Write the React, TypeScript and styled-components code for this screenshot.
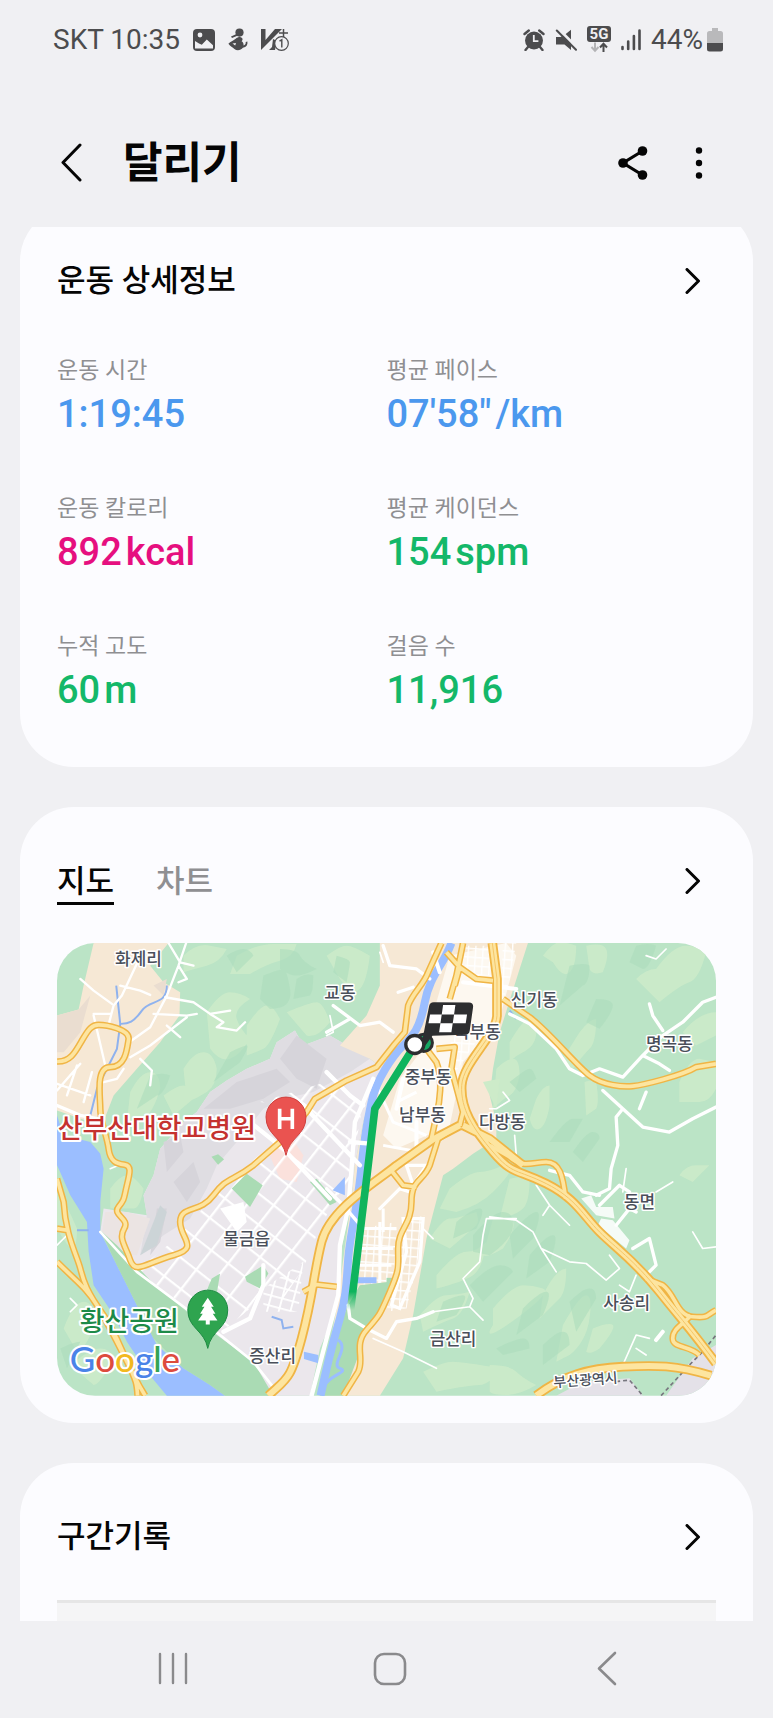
import React from 'react';
import styled, { createGlobalStyle } from 'styled-components';

const GlobalStyle = createGlobalStyle`
  * { box-sizing: border-box; }
  body {
    margin: 0;
    background: #f0f0f3;
    color: #050505;
    font-family: Roboto, "Noto Sans CJK KR", sans-serif;
  }
  button {
    border: 0;
    padding: 0;
    background: none;
    color: inherit;
    font: inherit;
    cursor: pointer;
  }
  svg { display: block; }
`;

const Screen = styled.div`
  display: flex;
  flex-direction: column;
  height: 100vh;
`;

const StatusBar = styled.div`
  display: flex;
  flex: none;
  justify-content: space-between;
  align-items: center;
  height: 80px;
  padding: 0 50px 0 53px;
  color: #4c4c4e;
  font-size: 28px;
  line-height: 32px;
`;

const StatusGroup = styled.div<{ $gap: number }>`
  display: flex;
  align-items: center;
  gap: ${(p) => p.$gap}px;
`;

const Header = styled.header`
  display: flex;
  flex: none;
  align-items: center;
  height: 147px;
  padding: 18px 60px 0;
`;

const Title = styled.h1`
  flex: 1;
  margin: 0 0 0 40px;
  font-size: 43px;
  line-height: 56px;
  font-weight: 700;
`;

const HeaderActions = styled.div`
  display: flex;
  align-items: center;
  gap: 36px;
`;

const Content = styled.main`
  flex: 1;
  min-height: 0;
  overflow-y: auto;
  scrollbar-width: none;
`;

const CardList = styled.div`
  display: flex;
  flex-direction: column;
  gap: 40px;
  margin-top: -20px;
  padding: 0 20px;
`;

const Card = styled.section<{ $bottom: number }>`
  padding: 54px 37px ${(p) => p.$bottom}px;
  border-radius: 54px;
  background: #fcfcff;
`;

const CardHead = styled.div`
  display: flex;
  justify-content: space-between;
  align-items: flex-start;
`;

const CardTitle = styled.h2`
  margin: 0;
  font-size: 31px;
  line-height: 40px;
  font-weight: 500;
`;

const ChevronButton = styled.button`
  display: grid;
  place-items: center;
  width: 46px;
  height: 40px;
`;

const Metrics = styled.dl`
  display: grid;
  grid-template-columns: 1fr 1fr;
  row-gap: 52px;
  margin: 54px 0 0;
`;

const MetricLabel = styled.dt`
  color: #8f8f92;
  font-size: 23px;
  line-height: 32px;
`;

const MetricValue = styled.dd<{ $color: string }>`
  display: flex;
  gap: 4px;
  margin: 0;
  color: ${(p) => p.$color};
  font-size: 38px;
  line-height: 54px;
  font-weight: 500;
`;

const Tabs = styled.div`
  display: flex;
  gap: 42px;
`;

const Tab = styled.button<{ $active?: boolean }>`
  height: 44px;
  border-bottom: 3px solid ${(p) => (p.$active ? '#050505' : 'transparent')};
  color: ${(p) => (p.$active ? '#050505' : '#8f8f92')};
  font-size: 31px;
  line-height: 40px;
  font-weight: 500;
`;

const MapFrame = styled.div`
  margin-top: 38px;
  overflow: hidden;
  border-radius: 38px;
`;

const MapSvg = styled.svg`
  width: 100%;
  height: auto;
  font-family: "Noto Sans CJK KR", sans-serif;
`;

const SplitTable = styled.div`
  height: 120px;
  margin-top: 43px;
  border-top: 3px solid #e6e6e6;
  background: #f5f5f6;
`;

const NavBar = styled.nav`
  display: grid;
  flex: none;
  grid-template-columns: repeat(3, 1fr);
  height: 97px;
  padding: 0 58px 2px 64px;
`;

const NavButton = styled.button`
  display: grid;
  place-items: center;
`;

const ChevronRight = () => (
  <svg width="16" height="26" viewBox="0 0 16 26" fill="none" stroke="#050505" strokeWidth="3" strokeLinecap="round" strokeLinejoin="round">
    <path d="M2 1.500 13.500 13 2 24.500" />
  </svg>
);

const PictureIcon = () => (
  <svg width="24" height="24" viewBox="0 0 24 24">
    <rect x="1" y="1" width="22" height="22" rx="4" fill="#4c4c4e" />
    <circle cx="8" cy="7" r="2.4" fill="#f0f0f3" />
    <path d="M3 13l4 2.4 2.8 1.4 5-5.2 6.2 5.6v3.2H3z" fill="#f0f0f3" />
  </svg>
);

const SwimmerIcon = () => (
  <svg width="20" height="24" viewBox="0 0 20 24" fill="#4c4c4e">
    <circle cx="11.5" cy="4.6" r="4.1" />
    <path d="M3 8.5 8.5 6l1.5 1.6L4 10z" />
    <path d="M8 10.500c2-1.600 4.500-2 6-.6 1 1 .5 2.300-.4 3.300 1.700 1 2.200 2.700 1.900 4.200 1.600-.4 2.500-1.500 2.200-3.400l1.700-.4c.5 3.500-1 5.500-4.500 6.200-2 2.600-6 3.200-8.500 1.200C4.600 19.400 2.400 18.500.4 15.800c2.200-2.600 4.600-2.700 7.600-5.300z" />
    <path d="M4.500 15.500l3.500-.6-.8 2.500z" fill="#f0f0f3" />
  </svg>
);

const BadgeIcon = () => (
  <svg width="29" height="24" viewBox="0 0 29 24">
    <path d="M1 1h4.500v11L15 1h7L1 22z" fill="#4c4c4e" />
    <path d="M13 11l4 2-2 9H9l3-3z" fill="#4c4c4e" />
    <path d="M23.500 1v8M19 5h9" stroke="#4c4c4e" strokeWidth="1.500" />
    <circle cx="21.500" cy="15.500" r="6.800" fill="#f0f0f3" stroke="#4c4c4e" strokeWidth="1.200" />
    <path d="M19.500 13.200l2.300-1.400V19.500" fill="none" stroke="#4c4c4e" strokeWidth="1.400" />
  </svg>
);

const AlarmIcon = () => (
  <svg width="22" height="22" viewBox="0 0 22 22">
    <circle cx="11" cy="11.500" r="9" fill="#4c4c4e" />
    <path d="M1.500 5 5.800 1.500M20.500 5 16.200 1.500M5 18l-2.500 3M17 18l2.500 3" stroke="#4c4c4e" strokeWidth="2.400" strokeLinecap="round" />
    <path d="M10.800 6v6.200h4.600" fill="none" stroke="#f0f0f3" strokeWidth="1.800" />
  </svg>
);

const MuteIcon = () => (
  <svg width="22" height="22" viewBox="0 0 22 22">
    <path d="M1 8h4.500l4-2L16 .8V21l-6.500-5.500H1z" fill="#4c4c4e" />
    <path d="M3.500 0 22 18.500" stroke="#f0f0f3" strokeWidth="3" />
    <path d="M1.800 1.500 21 20.800" stroke="#4c4c4e" strokeWidth="2" strokeLinecap="round" />
  </svg>
);

const FiveGIcon = () => (
  <svg width="24" height="28" viewBox="0 0 24 28">
    <rect width="24" height="16" rx="3" fill="#4c4c4e" />
    <text x="12" y="13" textAnchor="middle" fontFamily="Roboto, sans-serif" fontWeight="700" fontSize="15" fill="#f0f0f3">5G</text>
    <path d="M8 16.500v8M4.500 21 8 24.800 11.500 21" fill="none" stroke="#b3b3b5" strokeWidth="2" />
    <path d="M16.500 26v-8M13 21.500l3.500-3.800 3.500 3.800" fill="none" stroke="#4c4c4e" strokeWidth="2" />
  </svg>
);

const SignalIcon = () => (
  <svg width="20" height="22" viewBox="0 0 20 22" stroke="#4c4c4e" strokeWidth="2.600" strokeLinecap="round">
    <path d="M1.500 18v2M7.200 12.500V20M12.900 7V20M18.500 1.500V20" />
  </svg>
);

const BatteryIcon = () => (
  <svg width="16" height="24" viewBox="0 0 16 24">
    <path d="M5 0h6v3h2.500a2.500 2.500 0 0 1 2.500 2.500V16H0V5.500A2.500 2.500 0 0 1 2.500 3H5z" fill="#b9b9bb" />
    <path d="M0 15h16v6a2.500 2.500 0 0 1-2.500 2.500h-11A2.500 2.500 0 0 1 0 21z" fill="#4c4c4e" />
  </svg>
);

const metrics = [
  { label: '운동 시간', value: '1:19:45', color: '#4b98ee' },
  { label: '평균 페이스', value: '07\'58"', unit: '/km', color: '#4b98ee' },
  { label: '운동 칼로리', value: '892', unit: 'kcal', color: '#e60f7f' },
  { label: '평균 케이던스', value: '154', unit: 'spm', color: '#14b869' },
  { label: '누적 고도', value: '60', unit: 'm', color: '#14b869' },
  { label: '걸음 수', value: '11,916', color: '#14b869' },
];

/* Map geometry: one map unit is a third of a pixel at full width. */

const lightHills = [
  'M400 60q40-40 80-30l50 10q-20 40-60 50t-70 20z',
  'M560 60q60-35 110-35h70q-10 40-50 50t-90 40h-60z',
  'M470 230q40-60 70-60t60 20q-50 30-40 60t40 60q-30 50-60 60t-60-30z',
  'M400 400q30-50 60-50t40 50q0 50-30 70t-60 30z',
  'M240 470q30-60 60-60t30 50q-20 70-50 90t-50 10z',
  'M340 480q40-30 60-30t30 40l-60 50z',
  'M590 270q40-60 60-60t40 40q-30 80-50 90t-50 20z',
  'M830 60q40-30 60-30t70 30q-10 80-30 100t-60-30z',
  'M710 230q70-30 90-30t40 60q-40 50-70 40z',
  'M1480 60q30-40 50-40t50 10q0 60-20 80t-50-30z',
  'M1610 30q50-10 60 10t-10 70q-30 10-40-10z',
  'M1760 130q30-30 60-30 50-70 90-70t60 20q-20 80-50 90t-90 60z',
  'M1590 290q30-40 50-40 0 70-20 90t-50 60q-20-10-30-30z',
  'M1380 320q40-70 60-70t20 40-40 60-40 40z',
  'M1340 400q30-30 50-30t20 50q-10 50-30 60t-50 40z',
  'M1890 440q30-70 60-70l50 10v80q-20 40-50 40h-60z',
  'M1460 490q20-40 40-40v60q-10 60-30 70t-30-30z',
  'M1605 440q20-10 35 0 10 60 0 80l-30 20z',
  'M1900 290q50-60 100-60v70l-60 30z',
  'M1200 760q60-50 90-50t70-20q30 0 20 20t-50 60-110 60l-50-10z',
  'M1140 910q40-60 60-60t80-20q10 30 0 40t-80 70z',
  'M1160 1020q60-70 90-70t60-30q-10 80-40 100t-110 40z',
  'M1110 1140q50-60 80-60t70-10q-20 70-50 80t-90 40z',
  'M1380 730q40-10 60 0 0 70-20 90t-70 30z',
  'M1330 850q50-10 60 10t-30 80q-50 30-60 20z',
  'M1480 1080q40-80 70-80 0 70-20 90t-60 60z',
  'M1540 1170q50-90 70-90t10 70-60 110l-40 20z',
  'M1330 1120q60-70 90-70t60 10-80 90-70 20z',
  'M1630 1180q50-20 60-10t-40 70q-30 20-40 10z',
  'M1120 1310q60-30 90-30t140 20q-30 50-60 50t-130 20z',
  'M1320 1290q60 0 80 20t60 40q-50 30-90 30t-50-10z',
  'M1890 720q20-30 50-30h40l-50 50z',
  'M40 1180q30-80 60-80t40 60q-40 90-60 90z',
  'M60 1290q60-50 90-50t40 30q-40 80-60 80z',
  'M180 760q30-40 50-40t50 40q-10 60-30 60h-70z',
  'M20 740q10 50 20 60t40 80q0 50-10 60t-50-60z',
];

const darkHills = [
  'M640 120q50-20 60-20t20 60-60 60l-30-30z',
  'M690 40q50 0 60 20t50 40q-40 20-60 20t-50-20z',
  'M740 130q30-20 50-10 0 50-10 60l-50 10z',
  'M860 60q40 10 40 20t-10 60l-40-30z',
  'M530 60q30-20 50-20t30 20l-50 50z',
  'M300 420q40-10 60 0-20 60-40 60l-60 40z',
  'M540 350q40-20 50-20t-20 50l-80 60z',
  'M1560 90q50-10 60 0 0 50-20 60l-70 60z',
  'M1640 190q50 0 50 20t-40 70l-40-20z',
  'M1380 440q50-40 60-40t20 30l-50 40z',
  'M1500 620q50-70 70-70h30l-40 70z',
  'M1570 650q40-60 60-60t20 20l-50 70z',
  'M1760 30q40-10 60 0-20 70-40 70l-40-20z',
  'M1220 860q50-40 70-40t-10 60l-70 30z',
  'M1270 900q60-70 90-70t30 40-70 90l-50-10z',
  'M1380 900q60-70 80-70t-10 80l-60 60z',
  'M1440 960q50-60 70-60t-10 80l-70 50z',
  'M1260 1050q60-60 90-60t40 20l-90 90z',
  'M1420 1120q50-50 70-50t-10 70l-80 60z',
  'M1560 1100q40-40 60-40t20 30l-60 100z',
  'M1480 1230q40-40 60-40t20 40l-80 60z',
  'M1180 1100q40-20 60-20t-20 60l-60 20z',
  'M1340 1240q60-30 80-30t20 30l-80 20z',
  'M30 1240q40-20 60-20l-40 80z',
];

const whiteRoads = [
  'M262 80 215 180 190 210 175 268',
  'M408 22 385 90 350 180 300 275 240 318',
  'M355 22 390 80 430 90',
  'M90 130 130 165 185 205',
  'M20 465 90 385M130 240 165 390M80 390 50 480M125 410 100 500M20 445 120 480',
  'M210 150 270 165 300 178M345 185 430 200 480 235 540 225M310 235 410 240 440 235',
  'M350 270 390 305M410 245 300 330 240 365M270 370 305 405 300 450',
  'M480 235 520 260 500 275 560 285 585 260',
  'M385 90 410 130 385 140M130 235h50',
  'M160 440 200 430 220 400',
];

const wideWhiteRoads = [
  'M20 510 90 540 140 550',
  'M1000 30 1020 90 1100 100 1140 130',
  'M850 210 930 270 990 260 1030 290M900 250 830 290',
  'M1045 170 1090 155',
  'M1380 235 1440 265 1520 340 1560 400 1600 420 1650 400 1720 425 1780 360 1840 300 1900 260 1960 200 2000 185',
  'M1780 360 1830 385 1860 405M1840 285 1810 240 1800 205',
  'M1720 520 1700 545 1705 630 1685 700 1680 760 1640 780',
  'M1660 465 1720 520 1780 575 1860 590 1930 550 2000 515M1790 470 1770 520',
  'M1650 780 1600 770 1560 720 1500 705',
  'M1650 810 1710 750 1740 770M1750 940 1800 910 1820 990 1790 1020 1800 1030',
  'M1700 870 1740 820 1760 830',
  'M895 1110 900 1150 950 1180 1010 1210 1040 1160 1100 1150 1150 1130',
  'M830 760 880 810 940 880M990 820 1050 760 1080 770',
];

const thinWhiteRoads = [
  'M840 240 850 290 830 300M990 50 1000 80',
  'M1320 845 1400 855 1450 890 1475 940 1560 980 1610 985 1670 1035 1710 1000 1680 960',
  'M1475 940 1520 1010M1460 750 1500 810 1480 840M1500 810 1560 870',
  'M1150 1130 1260 1115 1270 1090 1240 1030 1290 980 1300 900 1310 850 1400 850',
  'M1260 1115 1300 1155M970 1210 1060 1250 1160 1300',
  'M1720 1290 1760 1200 1800 1210M1760 1240 1790 1260',
  'M1930 890 1960 940 2000 935M1820 770 1870 740M1720 770 1730 700',
  'M1790 60 1820 70 1850 40M1360 470 1380 495 1340 520 1320 520M1395 600 1400 660',
  'M1710 1050 1740 1070 1760 1020M1120 880 1150 910',
  'M50 900 20 930M60 1090 80 1110 60 1130M205 690 180 700',
];

const mainRoads = [
  'M20 378C60 380 75 350 95 315S125 268 145 268 240 280 235 312 225 395 180 395 150 480 150 520 170 600 175 640 200 685 222 688 240 710 230 750 225 790 205 815 240 850 222 880 225 930 240 975 290 982 370 960 390 910 390 860 450 835 490 780 545 740 610 690L690 620 770 530 795 490 890 435 980 395 1035 325 1065 290 1075 210C1090 170 1120 150 1135 110L1175 22',
  'M1240 22 1220 120 1200 190',
  'M1190 50 1230 95 1280 130 1330 135',
  'M1230 95 1215 150',
  'M1360 190 1440 245C1500 290 1580 390 1620 420S1720 455 1750 452 1900 420 1940 395L2000 385',
  'M1320 630 1380 665C1420 700 1450 680 1490 680S1540 720 1548 790',
  'M1130 340 1160 380C1180 430 1170 500 1160 540L1145 610',
  'M1160 340 1215 335 1205 400 1240 530 1230 570',
  'M1235 565 1165 610 1140 690C1120 740 1085 730 1085 800S1045 880 1045 940 1050 1000 1020 1070 990 1140 950 1185 945 1270 925 1310L880 1382',
  'M1020 700 1060 750 1100 755',
  'M20 730 40 800C45 900 80 960 90 1000S110 1070 160 1140 220 1280 285 1382',
  'M20 980C80 1040 110 1060 140 1110S200 1220 230 1280 260 1350 262 1382',
  'M20 880 50 885',
  'M760 1070 800 1048 860 1055',
  'M1790 1030 1840 1050C1880 1080 1880 1140 1930 1145S1970 1140 2000 1125',
  'M1925 1140C1900 1170 1870 1180 1870 1210S1920 1230 1950 1260',
];

const highways = [
  'M1328 22 1342 130 1342 240C1340 300 1240 380 1236 450S1270 580 1330 650 1400 700 1490 745 1600 840 1650 890 1750 970 1830 1070 1930 1190 2000 1285',
  'M1240 570 1320 610 1420 690',
  'M1230 570 1150 612 1040 690C980 740 840 820 815 920S790 1080 755 1210 710 1330 655 1382',
  'M1460 1382C1540 1320 1620 1300 1720 1295S1880 1290 1985 1322',
];

const placeLabels = [
  { text: '화제리', x: 265, y: 88 },
  { text: '교동', x: 870, y: 190 },
  { text: '신기동', x: 1454, y: 211 },
  { text: '북부동', x: 1283, y: 308 },
  { text: '명곡동', x: 1860, y: 343 },
  { text: '중부동', x: 1135, y: 443 },
  { text: '남부동', x: 1118, y: 558 },
  { text: '다방동', x: 1358, y: 578 },
  { text: '물금읍', x: 590, y: 930 },
  { text: '증산리', x: 668, y: 1280 },
  { text: '동면', x: 1770, y: 818 },
  { text: '사송리', x: 1732, y: 1123 },
  { text: '금산리', x: 1210, y: 1230 },
];

const RouteMap = () => (
  <MapSvg viewBox="20 22 1980 1360" role="img" aria-label="달리기 경로 지도">
    <defs>
      <pattern id="blocks" width="64" height="74" patternUnits="userSpaceOnUse" patternTransform="rotate(38)">
        <path d="M0 0H64M0 0V74" stroke="#fff" strokeWidth="14" />
      </pattern>
      <pattern id="smallBlocks" width="34" height="30" patternUnits="userSpaceOnUse" patternTransform="rotate(15)">
        <path d="M0 0H34M0 0V30" stroke="#fff" strokeWidth="11" />
      </pattern>
      <pattern id="lots" width="22" height="26" patternUnits="userSpaceOnUse" patternTransform="rotate(4)">
        <path d="M0 0H22M0 0V26" stroke="#fff" strokeWidth="8" />
      </pattern>
      <linearGradient id="routeFade" gradientUnits="userSpaceOnUse" x1="0" y1="1070" x2="0" y2="1125">
        <stop offset="0" stopColor="#0fb45d" />
        <stop offset="1" stopColor="#0fb45d" stopOpacity="0" />
      </linearGradient>
    </defs>

    {/* terrain */}
    <path d="M20 22H2000V1382H20z" fill="#bbe4c6" />
    <path d={lightHills.join('')} fill="#cdebc9" opacity="0.85" />
    <path d={darkHills.join('')} fill="#acdcbd" opacity="0.6" />

    {/* valley farmland */}
    <path d="M130 22H355L300 90 340 140 390 170 388 240 330 320 260 400 190 480 165 545 120 560 20 525V240L85 222 100 150z" fill="#f6e8d5" />
    <path d="M20 240 85 222 120 180 90 290 40 350 20 350zM310 150l40-20-10 50z" fill="#eaddd0" />

    {/* town and quarry ground */}
    <path d="M310 720 330 640 400 560 440 530 480 470 530 435 590 400 660 370 680 320 735 285 760 330 840 300 960 370 1000 400 965 480 940 560 915 690 905 790 875 940 860 1120 810 1240 780 1382H660L610 1280 500 1200 330 1060 200 970 150 890 160 820 290 840 280 780z" fill="#ebe7ec" />
    <path d="M310 720 330 640 400 560 440 530 480 470 530 435 590 400 660 370 680 320 735 285 760 330 840 300 960 370 900 410 790 470 700 490 640 520 560 620 500 690 470 760 420 850 340 900 270 960 290 840 280 780z" fill="#dfdde2" />
    <path d="M460 520 560 440 680 400 720 440 640 490 540 520zM690 370 740 300 830 370 800 460 740 430zM340 620l50-20 10 50-50 60zM370 740l60-60 20 60-40 60zM320 820l30 0-20 100-30 40z" fill="#d6d4da" />
    <path d="M330 810 350 830 320 930 270 960z" fill="#ccd4d7" />
    <path d="M165 830 230 830 300 850 260 960 200 960 155 890z" fill="#ebe4e3" />
    <path d="M650 640 720 600 760 660 740 740 690 730z" fill="#fbe1dc" />
    <path d="M630 500 720 510 700 600 560 715 430 850 390 900 260 1005 420 1125 500 1200 540 1170 600 1120 640 1050 700 1090 760 1000 800 900 850 800 900 730 940 500 830 440z" fill="url(#blocks)" />
    <path d="M640 1060 760 980 745 1130 640 1130z" fill="url(#smallBlocks)" />
    <path d="M510 820 580 800 590 860 560 890z" fill="#fff" />
    <path d="M545 760 590 715 638 750 600 815zM484 664l20-7 18 15-18 16zM780 740 800 730 860 800 840 810zM585 1025 640 990 655 1015 630 1060 590 1040zM485 1030l25-15-10 60-30-10z" fill="#aadbb4" />
    <path d="M848 765 885 725 885 780z" fill="#9bbeff" />

    {/* eastern plain */}
    <path d="M990 22H1435L1410 100 1350 290 1330 400 1320 480 1340 560V610L1270 655 1210 700 1180 720 1130 910 1090 1140 1060 1270 990 1382H810L860 1120 905 790 915 690 940 560 1000 400 960 370 870 330 950 240 990 150z" fill="#f6e8d5" />
    <path d="M1200 60 1370 22 1400 60 1350 250 1240 380 1200 570 1040 640 1000 600 1050 430 1120 340z" fill="#fdf8f0" />
    <path d="M1360 22h40l-20 110-30 90zM1200 290 1320 260 1210 420zM1240 30h90v90h-80z" fill="url(#lots)" />
    <path d="M935 880 1040 860 1035 1050 915 1050zM1055 860 1125 840 1100 1000 1070 1120 1010 1130z" fill="url(#lots)" />
    <path d="M1060 850h60l-10 130-60 140-25-10 45-160zM1070 690h60l-40 60z" fill="none" stroke="#fff" strokeWidth="10" />
    <path d="M940 880h100M930 940h100M925 990h100M990 860v190M1000 820 1000 890M980 450 1030 560 1130 600M1000 630 1110 650M1040 500 1100 470" fill="none" stroke="#fff" strokeWidth="9" />
    <path d="M930 1050 1020 1040 1010 1090 990 1140 940 1190 930 1250 900 1330 880 1382H810L840 1280 870 1170 895 1110z" fill="#aadbb4" />
    <path d="M1010 1028h30v20h-30z" fill="#aadbb4" />
    <path d="M1300 440 1350 430 1340 520z" fill="#cdebc9" />

    {/* city boundary corner */}
    <path d="M1520 1382 1600 1340 1740 1330 1780 1382zM1850 1382 1930 1270 2000 1230V1382z" fill="#e4e1e8" />

    {/* water */}
    <path d="M20 540 40 600 120 620 150 655 160 700 150 800 150 890 200 990 250 1090 290 1170 320 1230 400 1300 480 1350 525 1382H350L290 1310 230 1220 190 1140 130 1050 115 950 110 860 60 780 25 700 20 690z" fill="#9bbeff" />
    <path d="M150 885 200 930 300 1035 420 1140 540 1230 610 1280 670 1382H525L480 1350 400 1300 310 1210 250 1090 200 990z" fill="#aadbb4" />
    <path d="M1205 22C1180 90 1140 120 1125 200S1090 300 1060 330 980 430 965 500 945 600 932 720 900 900 895 970 890 1080 870 1150 840 1250 812 1382" fill="none" stroke="#9bbeff" strokeWidth="24" />
    <path d="M922 1026H980V1044H922zM762 1250 805 1260V1285L762 1272z" fill="#9bbeff" />
    <path d="M865 1215C900 1240 840 1290 870 1300S840 1320 825 1350" fill="none" stroke="#9bbeff" strokeWidth="9" />
    <path d="M350 150C350 210 300 190 275 225S235 265 212 265M198 150 210 265 200 340 175 390 140 460 120 540M665 1145 695 1155 700 1180 730 1175M80 885H115M1380 225 1400 250" fill="none" stroke="#8fb2ee" strokeWidth="6" />
    <path d="M1700 1340 1740 1335 1780 1382M1835 1382 1920 1290 1960 1250 2000 1200" fill="none" stroke="#77767e" strokeWidth="5" strokeDasharray="12 9" />

    {/* local streets */}
    <g fill="none" stroke="#fff" strokeLinejoin="round" strokeLinecap="round">
      <path d={whiteRoads.join('')} strokeWidth="7" />
      <path d={wideWhiteRoads.join('')} strokeWidth="10" />
      <path d={thinWhiteRoads.join('')} strokeWidth="5" />
      <path d="M150 890 260 1010 420 1130 510 1200 610 1280 680 1370" strokeWidth="8" />
      <path d="M520 1190 600 1150 640 1050 640 990M830 410 900 480 940 510M900 620 960 625M760 510 930 690M600 560 700 640 840 790M970 430 915 560 905 700 895 820 870 930 865 1080 830 1210 785 1382" strokeWidth="13" />
      <path d="M1240 140 1400 160M1100 560V640M1060 430 1040 520M1840 1190 1820 1215M1150 50l20 60M1830 1070 1880 1130" strokeWidth="12" />
    </g>
    <path d="M1655 850 1690 855 1740 915 1730 940 1645 870zM1595 790 1625 780 1640 815 1690 815 1695 850 1640 840zM1820 990h-20" fill="#fff" opacity="0.85" />

    {/* arterial roads, casing below fill */}
    <g fill="none" strokeLinejoin="round">
      <path d={mainRoads.join('')} stroke="#f0b545" strokeWidth="20" />
      <path d={highways.join('')} stroke="#f0b545" strokeWidth="29" />
      <path d={mainRoads.join('')} stroke="#fde5a0" strokeWidth="11" />
      <path d={highways.join('')} stroke="#fde5a0" strokeWidth="18" />
      <path d={highways[0]} stroke="#f5c668" strokeWidth="3" />
    </g>

    {/* place names */}
    <g fontSize="51" fontWeight="500" fill="#4a4f5a" stroke="#fff" strokeWidth="9" strokeLinejoin="round" paintOrder="stroke" textAnchor="middle">
      {placeLabels.map((l) => (
        <text key={l.text} x={l.x} y={l.y}>{l.text}</text>
      ))}
      <text x="1608" y="1350" fontSize="42" transform="rotate(-4 1608 1335)">부산광역시</text>
    </g>
    <g fontSize="81" fontWeight="500" stroke="#fff" strokeWidth="12" strokeLinejoin="round" paintOrder="stroke">
      <text x="22" y="608" fill="#c5322f">산부산대학교병원</text>
      <text x="88" y="1188" fill="#1d8a48">황산공원</text>
    </g>
    <text x="58" y="1311" fontFamily="Lato, sans-serif" fontSize="105" fontWeight="500" stroke="#fff" strokeWidth="12" strokeLinejoin="round" paintOrder="stroke">
      <tspan fill="#4a83e8">G</tspan>
      <tspan fill="#dd4b3e">o</tspan>
      <tspan fill="#f2b91f">o</tspan>
      <tspan fill="#4a83e8">g</tspan>
      <tspan fill="#35a355">l</tspan>
      <tspan fill="#dd4b3e">e</tspan>
    </text>

    {/* hospital pin */}
    <path d="M708 660C698 605 648 600 648 545A60 60 0 0 1 768 545C768 600 718 605 708 660z" fill="#ea5350" stroke="#cf3f3c" strokeWidth="3" />
    <path d="M689 520V581M727 520V581M689 550H727" stroke="#fff" strokeWidth="11" />

    {/* park pin */}
    <path d="M473 1240C463 1185 413 1180 413 1125A60 60 0 0 1 533 1125C533 1180 483 1185 473 1240z" fill="#2ea44f" stroke="#1d8a42" strokeWidth="3" />
    <path d="M473 1088 491 1115H483L496 1136H488L502 1156H479V1168H467V1156H444L458 1136H450L463 1115H455z" fill="#fff" />

    {/* recorded route */}
    <path d="M1095 330 975 520 952 715 902 1125" fill="none" stroke="url(#routeFade)" strokeWidth="23" strokeLinejoin="round" />
    <circle cx="1122" cy="322" r="26" fill="#16a864" stroke="#2d2e30" strokeWidth="9" />
    <path d="M1118 312 1138 212Q1140 200 1152 200L1258 201Q1272 202 1270 216L1260 286Q1258 298 1246 298L1148 301 1118 342z" fill="#2d2e30" />
    <path d="M1180 208H1217L1213 237H1176zM1141 237H1176L1172 263H1136zM1213 237H1252L1248 263H1209zM1172 263H1209L1205 290H1168z" fill="#fff" />
    <circle cx="1095" cy="327" r="27" fill="#fff" stroke="#2d2e30" strokeWidth="10" />
  </MapSvg>
);

export default function App() {
  return (
    <>
      <GlobalStyle />
      <Screen>
        <StatusBar>
          <StatusGroup $gap={12}>
            <span>SKT 10:35</span>
            <PictureIcon />
            <SwimmerIcon />
            <BadgeIcon />
          </StatusGroup>
          <StatusGroup $gap={10}>
            <AlarmIcon />
            <MuteIcon />
            <FiveGIcon />
            <SignalIcon />
            <StatusGroup $gap={4}>
              <span>44%</span>
              <BatteryIcon />
            </StatusGroup>
          </StatusGroup>
        </StatusBar>

        <Header>
          <button type="button" aria-label="뒤로">
            <svg width="23" height="40" viewBox="0 0 23 40" fill="none" stroke="#050505" strokeWidth="3" strokeLinecap="round" strokeLinejoin="round">
              <path d="M20 2 3 19.500 20 37" />
            </svg>
          </button>
          <Title>달리기</Title>
          <HeaderActions>
            <button type="button" aria-label="공유">
              <svg width="32" height="36" viewBox="0 0 32 36" fill="#050505">
                <path d="M25.500 6 6 18l19.500 12" fill="none" stroke="#050505" strokeWidth="3.200" />
                <circle cx="25.500" cy="6" r="4.800" />
                <circle cx="6" cy="18" r="4.800" />
                <circle cx="25.500" cy="30" r="4.800" />
              </svg>
            </button>
            <button type="button" aria-label="더보기">
              <svg width="28" height="36" viewBox="0 0 28 36" fill="#050505">
                <circle cx="14" cy="5.500" r="3.200" />
                <circle cx="14" cy="18" r="3.200" />
                <circle cx="14" cy="30.500" r="3.200" />
              </svg>
            </button>
          </HeaderActions>
        </Header>

        <Content>
          <CardList>
            <Card $bottom={50}>
              <CardHead>
                <CardTitle>운동 상세정보</CardTitle>
                <ChevronButton type="button" aria-label="운동 상세정보 보기">
                  <ChevronRight />
                </ChevronButton>
              </CardHead>
              <Metrics>
                {metrics.map((m) => (
                  <div key={m.label}>
                    <MetricLabel>{m.label}</MetricLabel>
                    <MetricValue $color={m.color}>
                      <span>{m.value}</span>
                      {m.unit && <span>{m.unit}</span>}
                    </MetricValue>
                  </div>
                ))}
              </Metrics>
            </Card>

            <Card $bottom={27}>
              <CardHead>
                <Tabs role="tablist">
                  <Tab type="button" role="tab" aria-selected="true" $active>지도</Tab>
                  <Tab type="button" role="tab" aria-selected="false">차트</Tab>
                </Tabs>
                <ChevronButton type="button" aria-label="지도 보기">
                  <ChevronRight />
                </ChevronButton>
              </CardHead>
              <MapFrame>
                <RouteMap />
              </MapFrame>
            </Card>

            <Card $bottom={50}>
              <CardHead>
                <CardTitle>구간기록</CardTitle>
                <ChevronButton type="button" aria-label="구간기록 보기">
                  <ChevronRight />
                </ChevronButton>
              </CardHead>
              <SplitTable />
            </Card>
          </CardList>
        </Content>

        <NavBar>
          <NavButton type="button" aria-label="최근 앱">
            <svg width="30" height="33" viewBox="0 0 30 33" stroke="#8a8a8c" strokeWidth="2.400" strokeLinecap="round">
              <path d="M2 2V31M15 2V31M28 2V31" />
            </svg>
          </NavButton>
          <NavButton type="button" aria-label="홈">
            <svg width="34" height="34" viewBox="0 0 34 34" fill="none" stroke="#8a8a8c" strokeWidth="2.600">
              <rect x="2" y="2" width="30" height="30" rx="9" />
            </svg>
          </NavButton>
          <NavButton type="button" aria-label="뒤로 가기">
            <svg width="22" height="35" viewBox="0 0 22 35" fill="none" stroke="#8a8a8c" strokeWidth="2.600" strokeLinecap="round" strokeLinejoin="round">
              <path d="M19 2 3 17.500 19 33" />
            </svg>
          </NavButton>
        </NavBar>
      </Screen>
    </>
  );
}
